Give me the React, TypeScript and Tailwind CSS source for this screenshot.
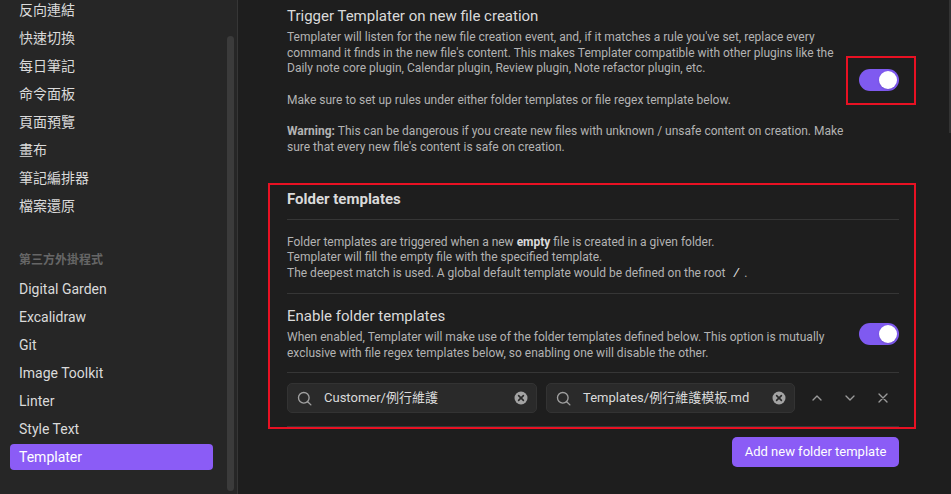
import React from "react";

const FONT = 'Roboto, "Noto Sans CJK TC", sans-serif';

function SearchIcon() {
  return (
    <svg width="17" height="17" viewBox="0 0 24 24" fill="none" stroke="#a0a0a0" strokeWidth="1.9" strokeLinecap="round" strokeLinejoin="round">
      <circle cx="11" cy="11" r="7.5" />
      <path d="M21 21l-4.5-4.5" />
    </svg>
  );
}

function ClearIcon() {
  return (
    <svg width="14" height="14" viewBox="0 0 14 14">
      <circle cx="7" cy="7" r="6.5" fill="#a3a3a3" />
      <path d="M4.6 4.6l4.8 4.8M9.4 4.6l-4.8 4.8" stroke="#2a2a2a" strokeWidth="1.6" strokeLinecap="round" />
    </svg>
  );
}

function Toggle() {
  return (
    <div className="relative h-[22px] w-[40px] shrink-0 rounded-full bg-[#7f5af0]">
      <div className="absolute right-[2px] top-[2px] h-[18px] w-[18px] rounded-full bg-white shadow" />
    </div>
  );
}

function SearchInput({ value }: { value: string }) {
  return (
    <div className="flex h-[30px] items-center rounded-[5px] border border-[#333333] bg-[#2a2a2a] pl-[8px] pr-[8px]">
      <SearchIcon />
      <span className="ml-[11px] flex-1 whitespace-nowrap text-[13px] text-[#dadada]">{value}</span>
      <ClearIcon />
    </div>
  );
}

const sidebarCore = ["反向連結", "快速切換", "每日筆記", "命令面板", "頁面預覽", "畫布", "筆記編排器", "檔案還原"];
const sidebarPlugins = ["Digital Garden", "Excalidraw", "Git", "Image Toolkit", "Linter", "Style Text", "Templater"];

function Line({ children }: { children?: React.ReactNode }) {
  return <div className="whitespace-nowrap">{children ?? "\u00a0"}</div>;
}

export default function App() {
  return (
    <div className="flex h-[494px] w-[951px] overflow-hidden bg-[#1e1e1e]" style={{ fontFamily: FONT }}>
      {/* Sidebar */}
      <div className="relative h-full w-[238px] shrink-0 border-r border-[#363636] bg-[#262626]">
        <div className="ml-[10px] mt-[-3px] flex w-[203px] flex-col gap-[2px]">
          {sidebarCore.map((s) => (
            <div key={s} className="flex h-[26px] items-center rounded-[4px] px-[9px] text-[14px] text-[#dadada]">
              {s}
            </div>
          ))}
          <div className="pb-[6px] pl-[9px] pt-[31px] text-[12px] font-semibold leading-[16px] text-[#666666]">第三方外掛程式</div>
          {sidebarPlugins.map((s) => (
            <div
              key={s}
              className={
                s === "Templater"
                  ? "flex h-[26px] items-center rounded-[4px] bg-[#8b5cf6] px-[9px] text-[14px] text-white"
                  : "flex h-[26px] items-center rounded-[4px] px-[9px] text-[14px] text-[#dadada]"
              }
            >
              {s}
            </div>
          ))}
        </div>
        <div className="absolute left-[227px] top-[36px] h-[455px] w-[7px] rounded-full bg-[#3b3b3b]" />
      </div>

      {/* Main */}
      <div className="relative min-w-0 flex-1 pl-[30px] pt-[6px]">
        <div className="w-[648px]">
          {/* Trigger row */}
          <div className="flex items-center pl-[19px]">
            <div className="min-w-0 flex-1">
              <div className="text-[15px] leading-[20px] text-[#dadada]">Trigger Templater on new file creation</div>
              <div className="mt-[4px] text-[12px] leading-[15.7px] text-[#b3b3b3]">
                <Line>Templater will listen for the new file creation event, and, if it matches a rule you've set, replace every</Line>
                <Line>command it finds in the new file's content. This makes Templater compatible with other plugins like the</Line>
                <Line>Daily note core plugin, Calendar plugin, Review plugin, Note refactor plugin, etc.</Line>
                <Line />
                <Line>Make sure to set up rules under either folder templates or file regex template below.</Line>
                <Line />
                <Line>
                  <b className="font-bold">Warning:</b> This can be dangerous if you create new files with unknown / unsafe content on creation. Make
                </Line>
                <Line>sure that every new file's content is safe on creation.</Line>
              </div>
            </div>
            <div className="shrink-0 border-2 border-[#e81123] pb-[12px] pl-[11px] pr-[15px] pt-[11px]">
              <Toggle />
            </div>
          </div>

          {/* Folder templates box */}
          <div className="mt-[27px] border-2 border-[#e81123] pl-[17px] pr-[15px]">
            <div className="border-b border-[#363636] pb-[10px] pt-[4px] text-[15px] font-bold leading-[20px] text-[#dadada]">
              Folder templates
            </div>
            <div className="border-b border-[#363636] pb-[12px] pt-[15px] text-[12px] leading-[15.5px] text-[#b3b3b3]">
              <Line>
                Folder templates are triggered when a new <b className="font-bold text-[#dadada]">empty</b> file is created in a given folder.
              </Line>
              <Line>Templater will fill the empty file with the specified template.</Line>
              <Line>
                The deepest match is used. A global default template would be defined on the root{" "}
                <code className="px-[4px] font-['Liberation_Mono',monospace] text-[13px] text-[#dadada]">/</code>.
              </Line>
            </div>
            <div className="flex items-center border-b border-[#363636] pb-[11px] pt-[12px]">
              <div className="min-w-0 flex-1">
                <div className="text-[15px] leading-[20px] text-[#dadada]">Enable folder templates</div>
                <div className="mt-[3px] text-[12px] leading-[16px] text-[#b3b3b3]">
                  <Line>When enabled, Templater will make use of the folder templates defined below. This option is mutually</Line>
                  <Line>exclusive with file regex templates below, so enabling one will disable the other.</Line>
                </div>
              </div>
              <Toggle />
            </div>
            <div className="flex items-center border-b border-[#363636] pb-[13px] pt-[10px]">
              <div className="w-[251px]">
                <SearchInput value="Customer/例行維護" />
              </div>
              <div className="ml-[9px] w-[250px]">
                <SearchInput value="Templates/例行維護模板.md" />
              </div>
              <div className="ml-[5px] flex">
                <div className="flex h-[30px] w-[33px] items-center justify-center">
                  <svg width="16" height="16" viewBox="0 0 24 24" fill="none" stroke="#9a9a9a" strokeWidth="2" strokeLinecap="round" strokeLinejoin="round">
                    <path d="M6 15l6-6 6 6" />
                  </svg>
                </div>
                <div className="flex h-[30px] w-[33px] items-center justify-center">
                  <svg width="16" height="16" viewBox="0 0 24 24" fill="none" stroke="#9a9a9a" strokeWidth="2" strokeLinecap="round" strokeLinejoin="round">
                    <path d="M6 9l6 6 6-6" />
                  </svg>
                </div>
                <div className="flex h-[30px] w-[33px] items-center justify-center">
                  <svg width="16" height="16" viewBox="0 0 24 24" fill="none" stroke="#9a9a9a" strokeWidth="2" strokeLinecap="round" strokeLinejoin="round">
                    <path d="M18 6L6 18M6 6l12 12" />
                  </svg>
                </div>
              </div>
            </div>
          </div>

          {/* Button */}
          <div className="mt-[8px] flex justify-end pr-[17px]">
            <div className="flex h-[30px] w-[167px] items-center justify-center rounded-[5px] bg-[#8b5cf6] text-[13px] text-white">
              Add new folder template
            </div>
          </div>
        </div>
        <div className="absolute right-0 top-0 h-[133px] w-[2px] bg-[#333333]" />
      </div>
    </div>
  );
}
